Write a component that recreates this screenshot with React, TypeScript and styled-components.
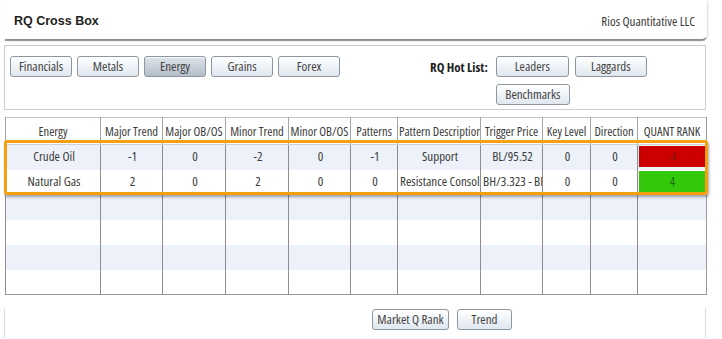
import styled, { createGlobalStyle } from "styled-components";

const GlobalStyle = createGlobalStyle`
  html, body {
    margin: 0;
    padding: 0;
    background: #ffffff;
  }
  body {
    width: 722px;
    height: 339px;
    overflow: hidden;
    font-family: "Open Sans", "Liberation Sans", Arial, sans-serif;
    font-stretch: condensed;
    color: #3a3a3a;
  }
`;

type Row = {
  name: string;
  values: string[];
  rank?: number;
};

const columns = [
  { label: "Energy", width: 95 },
  { label: "Major Trend", width: 62 },
  { label: "Major OB/OS", width: 63 },
  { label: "Minor Trend", width: 63 },
  { label: "Minor OB/OS", width: 62 },
  { label: "Patterns", width: 47 },
  { label: "Pattern Description", width: 83 },
  { label: "Trigger Price", width: 62 },
  { label: "Key Level", width: 48 },
  { label: "Direction", width: 47 },
  { label: "QUANT RANK", width: 69 },
];

const rows: Row[] = [
  { name: "Crude Oil", values: ["-1", "0", "-2", "0", "-1", "Support", "BL/95.52", "0", "0"], rank: -4 },
  { name: "Natural Gas", values: ["2", "0", "2", "0", "0", "Resistance Consolidation", "BH/3.323 - BL/3.1", "0", "0"], rank: 4 },
  { name: "", values: [] },
  { name: "", values: [] },
  { name: "", values: [] },
  { name: "", values: [] },
];

const sectors = ["Financials", "Metals", "Energy", "Grains", "Forex"];

const App = () => {
  return (
    <>
      <GlobalStyle />
      <Page>
        <Header>
          <Title>RQ Cross Box</Title>
          <Company>Rios Quantitative LLC</Company>
        </Header>

        <Toolbar>
          <SectorGroup>
            {sectors.map((s) => (
              <Button key={s} $active={s === "Energy"} $width={62}>
                {s}
              </Button>
            ))}
          </SectorGroup>
          <HotList>
            <HotLabel>RQ Hot List:</HotLabel>
            <HotButtons>
              <Button $width={73}>Leaders</Button>
              <Button $width={72}>Laggards</Button>
              <Button $width={74}>Benchmarks</Button>
            </HotButtons>
          </HotList>
        </Toolbar>

        <TableWrap>
          <Grid>
            <colgroup>
              {columns.map((c) => (
                <col key={c.label} style={{ width: c.width }} />
              ))}
            </colgroup>
            <thead>
              <tr>
                {columns.map((c) => (
                  <HeadCell key={c.label}>{c.label}</HeadCell>
                ))}
              </tr>
            </thead>
            <tbody>
              {rows.map((r, i) => (
                <BodyRow key={i} $striped={i % 2 === 0}>
                  <Cell>{r.name}</Cell>
                  {Array.from({ length: 9 }).map((_, j) => (
                    <Cell key={j}>{r.values[j] ?? ""}</Cell>
                  ))}
                  <RankCell>
                    {r.rank !== undefined && (
                      <RankFill $positive={r.rank > 0}>{r.rank}</RankFill>
                    )}
                  </RankCell>
                </BodyRow>
              ))}
            </tbody>
          </Grid>
          <Highlight />
        </TableWrap>

        <Footer>
          <Button $width={77}>Market Q Rank</Button>
          <Button $width={55}>Trend</Button>
        </Footer>
      </Page>
    </>
  );
};

const Page = styled.div`
  display: flex;
  flex-direction: column;
  width: 722px;
`;

const Header = styled.div`
  display: flex;
  justify-content: space-between;
  align-items: center;
  height: 39px;
  margin-left: 4px;
  width: 703px;
  padding: 0 12px 0 10px;
  box-sizing: border-box;
  background: #ffffff;
  border-radius: 0 0 5px 0;
  box-shadow: 0 3px 1px -1px #8e8e8e, 1px 1px 2px rgba(0, 0, 0, 0.15);
`;

const Title = styled.div`
  font-family: "Liberation Sans", Arial, sans-serif;
  font-stretch: normal;
  font-weight: bold;
  font-size: 12.5px;
  color: #222222;
  padding-top: 2px;
`;

const Company = styled.div`
  font-size: 13px;
  color: #3a3a3a;
  padding-top: 2px;
`;

const Toolbar = styled.div`
  display: flex;
  align-items: flex-start;
  margin: 6px 0 0 4px;
  width: 702px;
  height: 65px;
  box-sizing: border-box;
  border: 1px solid #c9cdd2;
  padding: 10px 0 0 5px;
`;

const SectorGroup = styled.div`
  display: flex;
  gap: 5px;
`;

const HotList = styled.div`
  display: flex;
  align-items: flex-start;
  margin-left: 90px;
`;

const HotLabel = styled.div`
  font-weight: bold;
  font-size: 13px;
  color: #222222;
  margin-top: 2px;
  margin-right: 8px;
`;

const HotButtons = styled.div`
  display: grid;
  grid-template-columns: 73px 72px;
  column-gap: 6px;
  row-gap: 7px;
`;

const Button = styled.button<{ $active?: boolean; $width: number }>`
  width: ${(p) => p.$width}px;
  height: 21px;
  padding: 0;
  font-family: "Open Sans", "Liberation Sans", Arial, sans-serif;
  font-stretch: condensed;
  font-size: 13px;
  line-height: 19px;
  white-space: nowrap;
  color: #444444;
  border: 1px solid #8d979f;
  border-radius: 3px;
  background: ${(p) =>
    p.$active
      ? "linear-gradient(#dfe4ea, #b3bdc9)"
      : "linear-gradient(#ffffff, #dfe7ef)"};
  box-shadow: inset 0 1px 0 rgba(255, 255, 255, 0.8);
  cursor: pointer;
`;

const TableWrap = styled.div`
  position: relative;
  margin: 7px 0 0 5px;
  width: 701px;
`;

const Grid = styled.table`
  width: 701px;
  table-layout: fixed;
  border-collapse: collapse;
  border: 1px solid #9a9a9a;
  border-top-color: #c4c4c4;
  font-size: 13px;
`;

const HeadCell = styled.th`
  height: 26px;
  padding: 0 1px;
  font-size: 12.5px;
  font-weight: normal;
  color: #3a3a3a;
  background: #ffffff;
  border-left: 1px solid #a4a4a4;
  border-bottom: 1px solid #d0d0d0;
  text-align: center;
  white-space: nowrap;
  overflow: hidden;
`;

const BodyRow = styled.tr<{ $striped: boolean }>`
  height: 25px;
  background: ${(p) => (p.$striped ? "#edf2fa" : "#ffffff")};
`;

const Cell = styled.td`
  padding: 0 0 2px 2px;
  border-left: 1px solid #8e8e8e;
  text-align: center;
  white-space: nowrap;
  overflow: hidden;
  color: #3a3a3a;
`;

const RankCell = styled.td`
  padding: 0 0 2px 1px;
  border-left: 1px solid #8e8e8e;
`;

const RankFill = styled.div<{ $positive: boolean }>`
  height: 21px;
  line-height: 21px;
  text-align: center;
  font-size: 12px;
  background: ${(p) => (p.$positive ? "#33c80a" : "#cc0000")};
  color: ${(p) => (p.$positive ? "#1d6b0a" : "#8a1010")};
`;

const Highlight = styled.div`
  position: absolute;
  left: -1px;
  top: 23px;
  width: 698px;
  height: 49px;
  border: 3px solid #f3a012;
  border-radius: 3px;
  box-shadow: 1px 2px 3px rgba(0, 0, 0, 0.35);
  pointer-events: none;
`;

const Footer = styled.div`
  display: flex;
  gap: 8px;
  margin: 13px 0 0 4px;
  width: 702px;
  height: 30px;
  box-sizing: border-box;
  padding: 1px 0 0 367px;
  border-left: 1px solid #dcdcdc;
  border-right: 1px solid #dcdcdc;
`;

export default App;
